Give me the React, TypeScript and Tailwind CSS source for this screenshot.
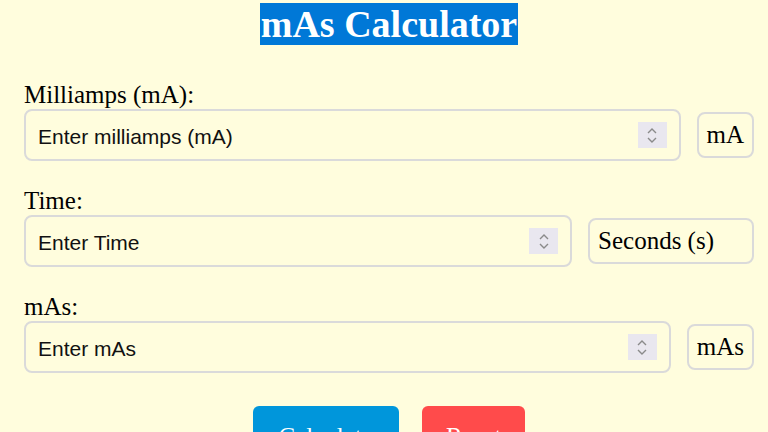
import { useState } from "react";

const serif = "font-['Liberation_Serif','Times_New_Roman',serif]";

function Spinner() {
    return (
        <div className="w-[29px] h-[26px] mr-[12px] bg-[#e9e7ef] flex flex-col items-center justify-center gap-[3px] shrink-0">
            <svg width="10" height="6" viewBox="0 0 10 6" fill="none">
                <path d="M1 5 L5 1 L9 5" stroke="#8a8a8a" strokeWidth="1.4" />
            </svg>
            <svg width="10" height="6" viewBox="0 0 10 6" fill="none">
                <path d="M1 1 L5 5 L9 1" stroke="#8a8a8a" strokeWidth="1.4" />
            </svg>
        </div>
    );
}

function Field({
    label,
    placeholder,
    unit,
    unitClass,
    value,
    onChange,
}: {
    label: string;
    placeholder: string;
    unit: string;
    unitClass: string;
    value: string;
    onChange: (v: string) => void;
}) {
    return (
        <div className="flex flex-col">
            <label className={`${serif} text-[25px] leading-[24px] h-[26px] text-black`}>
                {label}
            </label>
            <div className="flex items-center gap-[16px]">
                <div className="flex-1 h-[52px] flex items-center border-2 border-[#dadada] rounded-[8px]">
                    <input
                        type="text"
                        value={value}
                        onChange={(e) => onChange(e.target.value)}
                        placeholder={placeholder}
                        className="flex-1 min-w-0 h-full bg-transparent outline-none pl-[12px] pt-[3px] font-['Liberation_Sans',Arial,sans-serif] text-[21px] text-[#111] placeholder:text-[#111]"
                    />
                    <Spinner />
                </div>
                <div
                    className={`${serif} ${unitClass} h-[46px] flex items-center border-2 border-[#dadada] rounded-[8px] text-[25px] text-black shrink-0`}
                >
                    {unit}
                </div>
            </div>
        </div>
    );
}

export default function App() {
    const [ma, setMa] = useState("");
    const [time, setTime] = useState("");
    const [mas, setMas] = useState("");

    const calculate = () => {
        const a = parseFloat(ma);
        const t = parseFloat(time);
        const m = parseFloat(mas);
        if (!isNaN(a) && !isNaN(t)) setMas(String(a * t));
        else if (!isNaN(m) && !isNaN(a) && a !== 0) setTime(String(m / a));
        else if (!isNaN(m) && !isNaN(t) && t !== 0) setMa(String(m / t));
    };

    const reset = () => {
        setMa("");
        setTime("");
        setMas("");
    };

    return (
        <div className="min-h-screen w-full bg-[#fffddd] pl-6 pr-[14px] pt-[3px] overflow-hidden">
            <div className="flex justify-center">
                <h1
                    className={`${serif} inline-block bg-[#0078d7] text-white font-bold text-[38px] leading-[42px] h-[42px] px-[1px]`}
                >
                    mAs Calculator
                </h1>
            </div>
            <div className="mt-[38px] flex flex-col gap-[28px]">
                <Field
                    label="Milliamps (mA):"
                    placeholder="Enter milliamps (mA)"
                    unit="mA"
                    unitClass="px-2"
                    value={ma}
                    onChange={setMa}
                />
                <Field
                    label="Time:"
                    placeholder="Enter Time"
                    unit="Seconds (s)"
                    unitClass="pl-[8px] pr-[38px]"
                    value={time}
                    onChange={setTime}
                />
                <Field
                    label="mAs:"
                    placeholder="Enter mAs"
                    unit="mAs"
                    unitClass="px-2"
                    value={mas}
                    onChange={setMas}
                />
            </div>
            <div className="mt-[33px] flex justify-center gap-[23px]">
                <button
                    onClick={calculate}
                    className={`${serif} bg-[#0096db] text-white text-[25px] px-[26px] py-3 rounded-[6px]`}
                >
                    Calculate
                </button>
                <button
                    onClick={reset}
                    className={`${serif} bg-[#ff4b4b] text-white text-[25px] px-6 py-3 rounded-[6px]`}
                >
                    Reset
                </button>
            </div>
        </div>
    );
}
